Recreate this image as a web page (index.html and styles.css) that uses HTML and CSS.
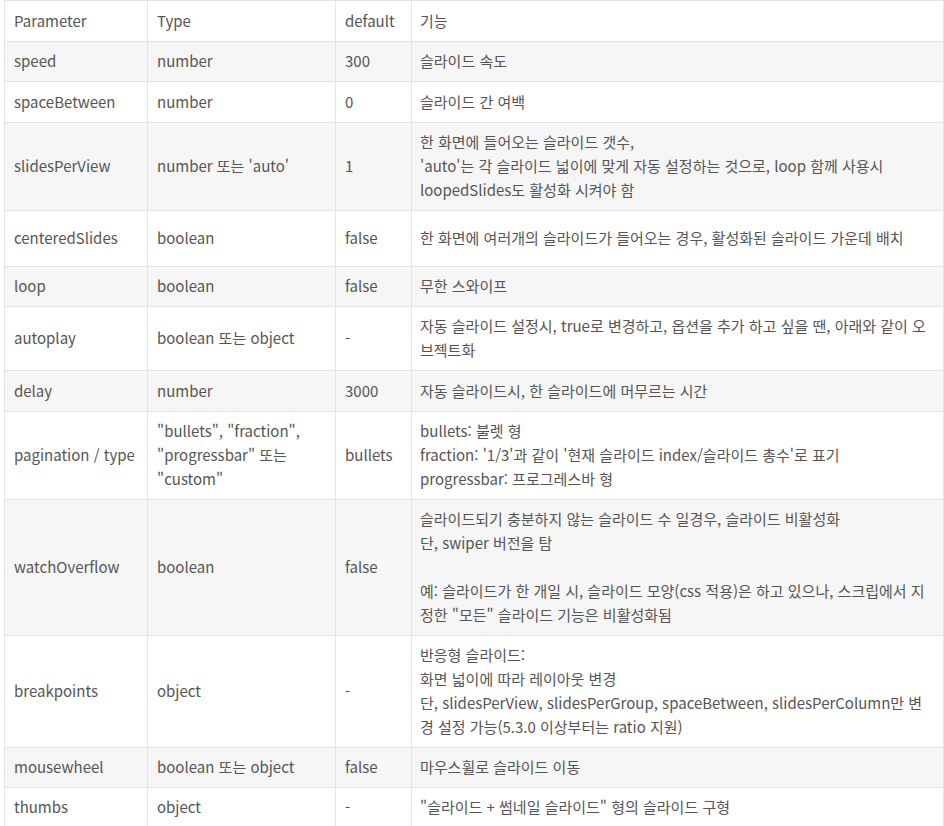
FILE: index.html
```html
<!DOCTYPE html>
<html lang="ko">
<head>
<meta charset="utf-8">
<title>Swiper 옵션</title>
<link rel="stylesheet" href="styles.css">
</head>
<body>
<table class="opts">
  <colgroup>
    <col class="c-param">
    <col class="c-type">
    <col class="c-def">
    <col class="c-desc">
  </colgroup>
  <tbody>
    <tr class="head"><td>Parameter</td><td>Type</td><td>default</td><td>기능</td></tr>
    <tr><td>speed</td><td>number</td><td>300</td><td>슬라이드 속도</td></tr>
    <tr class="plus"><td>spaceBetween</td><td>number</td><td>0</td><td>슬라이드 간 여백</td></tr>
    <tr><td>slidesPerView</td><td>number 또는 'auto'</td><td>1</td><td>한 화면에 들어오는 슬라이드 갯수,<br>'auto'는 각 슬라이드 넓이에 맞게 자동 설정하는 것으로, loop 함께 사용시 loopedSlides도 활성화 시켜야 함</td></tr>
    <tr class="tall"><td>centeredSlides</td><td>boolean</td><td>false</td><td>한 화면에 여러개의 슬라이드가 들어오는 경우, 활성화된 슬라이드 가운데 배치</td></tr>
    <tr><td>loop</td><td>boolean</td><td>false</td><td>무한 스와이프</td></tr>
    <tr><td>autoplay</td><td>boolean 또는 object</td><td>-</td><td>자동 슬라이드 설정시, true로 변경하고, 옵션을 추가 하고 싶을 땐, 아래와 같이 오브젝트화</td></tr>
    <tr class="plus"><td>delay</td><td>number</td><td>3000</td><td>자동 슬라이드시, 한 슬라이드에 머무르는 시간</td></tr>
    <tr><td>pagination / type</td><td>"bullets", "fraction", "progressbar" 또는 "custom"</td><td>bullets</td><td>bullets: 불렛 형<br>fraction: '1/3'과 같이 '현재 슬라이드 index/슬라이드 총수'로 표기<br>progressbar: 프로그레스바 형</td></tr>
    <tr><td>watchOverflow</td><td>boolean</td><td>false</td><td>슬라이드되기 충분하지 않는 슬라이드 수 일경우, 슬라이드 비활성화<br>단, swiper 버전을 탐<br><br>예: 슬라이드가 한 개일 시, 슬라이드 모양(css 적용)은 하고 있으나, 스크립에서 지정한 "모든" 슬라이드 기능은 비활성화됨</td></tr>
    <tr><td>breakpoints</td><td>object</td><td>-</td><td>반응형 슬라이드:<br>화면 넓이에 따라 레이아웃 변경<br>단, slidesPerView, slidesPerGroup, spaceBetween, slidesPerColumn만 변경 설정 가능(5.3.0 이상부터는 ratio 지원)</td></tr>
    <tr><td>mousewheel</td><td>boolean 또는 object</td><td>false</td><td>마우스휠로 슬라이드 이동</td></tr>
    <tr><td>thumbs</td><td>object</td><td>-</td><td>"슬라이드 + 썸네일 슬라이드" 형의 슬라이드 구형</td></tr>
  </tbody>
</table>
</body>
</html>
```
FILE: styles.css
```css
html, body {
  margin: 0;
  padding: 0;
  background: #fff;
}

.opts {
  margin-left: 4px;
  width: 940px;
  border-collapse: collapse;
  table-layout: fixed;
  font-family: "Noto Sans CJK KR", "Noto Sans", sans-serif;
  font-size: 15px;
  line-height: 24px;
  color: #555;
}

.c-param { width: 143px; }
.c-type { width: 188px; }
.c-def { width: 76px; }

.opts td {
  border: 1px solid #e3e3e3;
  padding: 7px 9px 8px 9px;
  vertical-align: middle;
  word-break: keep-all;
  overflow-wrap: break-word;
}

.opts td:last-child {
  padding-left: 8px;
  word-break: normal;
}

.opts tr:nth-child(even) td {
  background: #f6f6f6;
}

.opts tr.head td {
  padding-top: 8px;
}

.opts tr.plus td {
  padding-top: 8px;
}

.opts tr.tall td {
  height: 40px;
}
```
